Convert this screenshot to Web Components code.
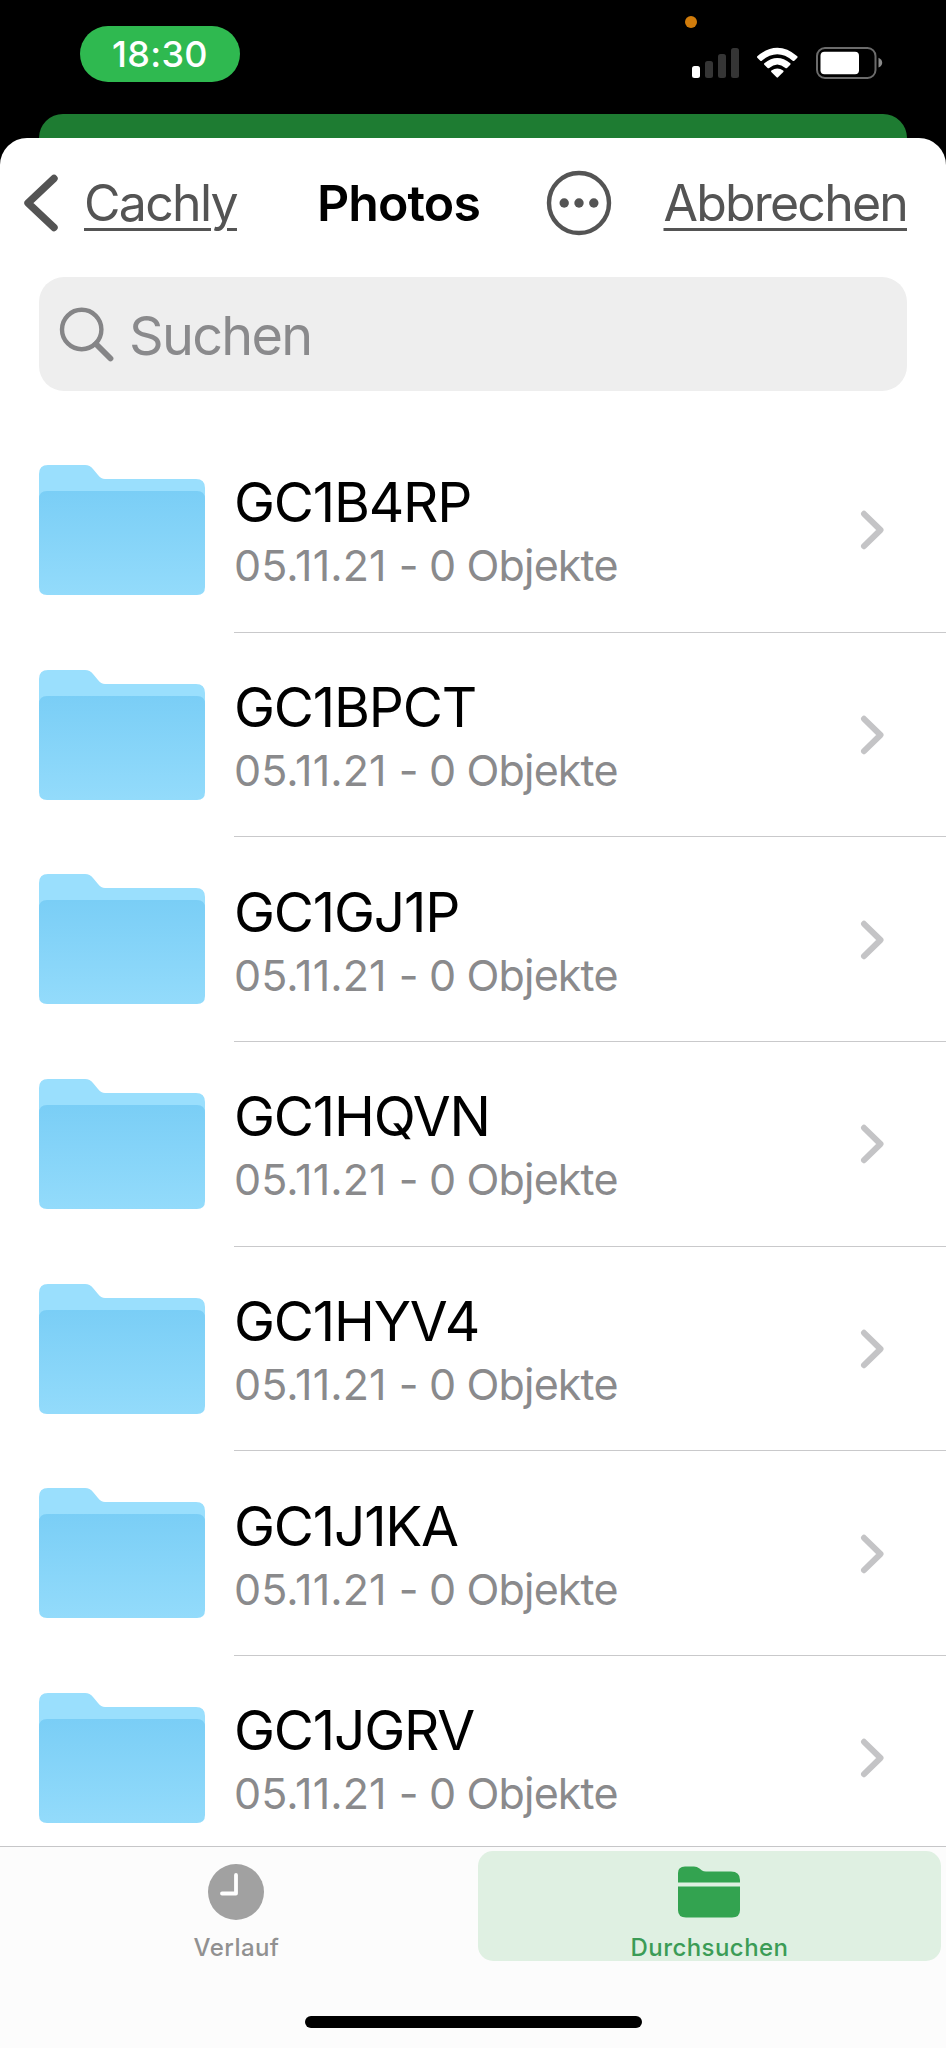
<!DOCTYPE html>
<html lang="de">
<head>
<meta charset="utf-8">
<title>Photos</title>
<style>
  html, body {
    margin: 0;
    background: #000;
  }
  body {
    font-family: Inter, "Liberation Sans", sans-serif;
    width: 946px;
    height: 2048px;
    overflow: hidden;
  }
</style>
</head>
<body>
<files-app></files-app>

<script>
// Status bar with the clock pill and the system icons
class StatusBar extends HTMLElement {
  constructor() {
    super();
    this.root = this.attachShadow({ mode: 'open' });
    this.root.innerHTML = `
      <style>
        :host {
          display: flex;
          justify-content: space-between;
          box-sizing: border-box;
          height: 114px;
          padding: 0 63px 0 80px;
          background: #000;
        }
        .time {
          width: 160px;
          height: 55.5px;
          margin-top: 26px;
          border-radius: 28px;
          background: #2fb950;
          color: #fff;
          font-size: 36px;
          font-weight: 500;
          line-height: 57px;
          text-align: center;
          letter-spacing: 0.3px;
        }
        svg { display: block; }
      </style>
      <div class="time"><slot></slot></div>
      <svg width="200" height="90" viewBox="683 0 200 90">
        <circle cx="691" cy="22" r="6" fill="#d17c0b"/>
        <rect x="692" y="66" width="8" height="12" rx="2.5" fill="#fff"/>
        <g fill="#353535">
          <rect x="705" y="61" width="8" height="17" rx="2.5"/>
          <rect x="718" y="54" width="8" height="24" rx="2.5"/>
          <rect x="731" y="48" width="8" height="30" rx="2.5"/>
        </g>
        <g fill="#fff">
          <path d="M757.3 56.2Q777.3 39.4 797.3 56.2Q798 57 797.3 57.7L794.3 60.7Q793.5 61.4 792.7 60.7Q777.3 47.8 761.9 60.7Q761.1 61.4 760.3 60.7L757.3 57.7Q756.6 57 757.3 56.2Z"/>
          <path d="M764.3 63.3Q777.3 52.5 790.3 63.3Q791 64.1 790.3 64.8L787 68Q786.2 68.6 785.4 68Q777.3 61 769.2 68Q768.4 68.6 767.6 68L764.3 64.8Q763.6 64.1 764.3 63.3Z"/>
          <path d="M771.4 70.4Q777.3 66.6 783.2 70.4Q784 71.1 783.3 71.9L778 77.3Q777.3 78 776.6 77.3L771.3 71.9Q770.6 71.1 771.4 70.4Z"/>
        </g>
        <rect x="817" y="48" width="58.5" height="30" rx="8" fill="none" stroke="#6b6b6b" stroke-width="2"/>
        <rect x="820.5" y="51.7" width="38.5" height="22.5" rx="4" fill="#fff"/>
        <path d="M878.5 57.8Q882.2 59.5 882.2 62.7T878.5 67.6Z" fill="#8a8a8a"/>
      </svg>
    `;
  }
}
customElements.define('status-bar', StatusBar);

// Navigation header: back link, title, more button, cancel link
class NavHeader extends HTMLElement {
  constructor() {
    super();
    this.root = this.attachShadow({ mode: 'open' });
    this.root.innerHTML = `
      <style>
        :host {
          display: flex;
          align-items: center;
          box-sizing: border-box;
          height: 130px;
          padding: 0 39px 0 24px;
          color: #545454;
          font-size: 50px;
          line-height: 60px;
          white-space: nowrap;
        }
        svg { display: block; flex: none; }
        .link {
          text-decoration: underline;
          text-decoration-thickness: 3px;
          text-underline-offset: 7px;
        }
        .back { margin-left: 24px; width: 153px; letter-spacing: -1.7px; }
        .title {
          width: 163px;
          margin-left: 80px;
          color: #000;
          font-weight: 600;
          letter-spacing: -0.9px;
        }
        .more { margin-left: 66px; }
        .cancel { margin-left: auto; letter-spacing: -1.8px; }
      </style>
      <svg width="36" height="58" viewBox="24 174 36 58" fill="none" stroke="#545454" stroke-width="7.4" stroke-linecap="round" stroke-linejoin="round">
        <path d="M54 178.5L28 203L54 227.5"/>
      </svg>
      <span class="link back"><slot name="back"></slot></span>
      <span class="title"><slot name="title"></slot></span>
      <svg class="more" width="66" height="66" viewBox="-33 -33 66 66">
        <circle r="30" fill="none" stroke="#545454" stroke-width="4.4"/>
        <g fill="#545454">
          <circle cx="-14.8" r="4.7"/>
          <circle r="4.7"/>
          <circle cx="14.8" r="4.7"/>
        </g>
      </svg>
      <span class="link cancel"><slot name="cancel"></slot></span>
    `;
  }
}
customElements.define('nav-header', NavHeader);

class SearchField extends HTMLElement {
  constructor() {
    super();
    this.root = this.attachShadow({ mode: 'open' });
    this.root.innerHTML = `
      <style>
        :host {
          display: flex;
          align-items: center;
          box-sizing: border-box;
          height: 114px;
          margin: 9px 39px 0;
          padding-left: 20px;
          border-radius: 25px;
          background: #eee;
          color: #8a8a8c;
          font-size: 54px;
          letter-spacing: -1.7px;
        }
        span { margin-left: 13px; padding-top: 3px; }
      </style>
      <svg width="57" height="57" viewBox="59 305 57 57" fill="none" stroke="#858587">
        <circle cx="81.7" cy="328.5" r="19.7" stroke-width="4.4"/>
        <path d="M96 343L110.5 357.5" stroke-width="5.8" stroke-linecap="round"/>
      </svg>
      <span><slot></slot></span>
    `;
  }
}
customElements.define('search-field', SearchField);

// One folder in the list, the name is slotted and the details come from attributes
class FolderRow extends HTMLElement {
  constructor() {
    super();
    this.root = this.attachShadow({ mode: 'open' });
  }

  connectedCallback() {
    this.root.innerHTML = `
      <style>
        :host {
          display: flex;
          align-items: stretch;
          flex: none;
          height: 204.7px;
          padding-left: 39px;
        }
        .folder { display: block; flex: none; margin-top: 37px; }
        .content {
          display: flex;
          align-items: center;
          justify-content: space-between;
          box-sizing: border-box;
          flex: 1;
          margin-left: 29px;
          padding: 1px 59px 0 0;
          border-bottom: 1px solid #c9c9cb;
        }
        .name {
          color: #000;
          font-size: 55px;
          line-height: 66px;
          letter-spacing: -1.2px;
        }
        .info {
          color: #8a8a8c;
          font-size: 43px;
          line-height: 52px;
          letter-spacing: -0.85px;
          margin-top: 4px;
        }
        .date { letter-spacing: 0.1px; }
      </style>
      <svg class="folder" width="166" height="131" viewBox="0 0 166 131">
        <defs>
          <linearGradient id="front" x1="0" y1="0" x2="0" y2="1">
            <stop offset="0" stop-color="#7acef6"/>
            <stop offset="1" stop-color="#93dbfb"/>
          </linearGradient>
        </defs>
        <path d="M0 9Q0 0 9 0H46Q51 0 54 4L59 10Q62 14 66 14H157Q166 14 166 23V60H0Z" fill="#9adffd"/>
        <path d="M0 34Q0 26 8 26H158Q166 26 166 34V122Q166 130 158 130H8Q0 130 0 122Z" fill="url(#front)"/>
      </svg>
      <div class="content">
        <div>
          <div class="name"><slot></slot></div>
          <div class="info"><span class="date">${this.getAttribute('date')} </span>- ${this.getAttribute('count')} Objekte</div>
        </div>
        <svg width="27" height="42" viewBox="0 0 27 42" fill="none" stroke="#c4c4c6" stroke-width="6" stroke-linecap="round" stroke-linejoin="round">
          <path d="M4 4.8L20.5 21L4 37.2"/>
        </svg>
      </div>
    `;
  }
}
customElements.define('folder-row', FolderRow);

class TabItem extends HTMLElement {
  constructor() {
    super();
    this.root = this.attachShadow({ mode: 'open' });
    this.root.innerHTML = `
      <style>
        :host {
          display: flex;
          flex-direction: column;
          align-items: center;
          flex: 1;
          height: 109.5px;
          margin: 4.5px 5px 5px;
          border-radius: 15px;
          color: #919191;
          font-size: 24px;
          font-weight: 500;
          line-height: 30px;
          letter-spacing: 0.45px;
        }
        :host([active]) {
          background: #dff0e2;
          color: #3b9c56;
        }
        ::slotted(svg) {
          display: block;
          flex: none;
          margin: 13px 1px 13px 0;
        }
      </style>
      <slot name="icon"></slot>
      <span><slot></slot></span>
    `;
  }
}
customElements.define('tab-item', TabItem);

class TabBar extends HTMLElement {
  constructor() {
    super();
    this.root = this.attachShadow({ mode: 'open' });
    this.root.innerHTML = `
      <style>
        :host {
          display: flex;
          flex-direction: column;
          align-items: center;
          flex: none;
          box-sizing: border-box;
          height: 202.5px;
          border-top: 1px solid #c6c6c8;
          background: #fcfcfc;
        }
        .tabs { display: flex; width: 100%; }
        .home {
          width: 337px;
          height: 12px;
          margin-top: 50.5px;
          border-radius: 6px;
          background: #000;
        }
      </style>
      <div class="tabs"><slot></slot></div>
      <div class="home"></div>
    `;
  }
}
customElements.define('tab-bar', TabBar);

class FilesApp extends HTMLElement {
  constructor() {
    super();
    this.root = this.attachShadow({ mode: 'open' });
    this.folders = ['GC1B4RP', 'GC1BPCT', 'GC1GJ1P', 'GC1HQVN', 'GC1HYV4', 'GC1J1KA', 'GC1JGRV'];
  }

  connectedCallback() {
    this.root.innerHTML = `
      <style>
        :host {
          display: flex;
          flex-direction: column;
          height: 2048px;
          background: #000;
        }
        .behind {
          flex: none;
          height: 24px;
          margin: 0 39px;
          border-radius: 25px 25px 0 0;
          background: #1e7c32;
        }
        .sheet {
          display: flex;
          flex-direction: column;
          flex: 1;
          min-height: 0;
          border-radius: 27px 27px 0 0;
          background: #fff;
        }
        .list {
          display: flex;
          flex-direction: column;
          flex: 1;
          min-height: 0;
          padding-top: 37px;
          overflow: hidden;
        }
      </style>
      <status-bar>18:30</status-bar>
      <div class="behind"></div>
      <div class="sheet">
        <nav-header>
          <span slot="back">Cachly</span>
          <span slot="title">Photos</span>
          <span slot="cancel">Abbrechen</span>
        </nav-header>
        <search-field>Suchen</search-field>
        <div class="list">
          ${this.folders.map((name) => `<folder-row date="05.11.21" count="0">${name}</folder-row>`).join('')}
        </div>
        <tab-bar>
          <tab-item>
            <svg slot="icon" width="56" height="56" viewBox="0 0 56 56">
              <circle cx="28" cy="28" r="28" fill="#a1a1a1"/>
              <path d="M28 11V29.5H14" fill="none" stroke="#fff" stroke-width="3.8" stroke-linecap="round" stroke-linejoin="round"/>
            </svg>
            Verlauf
          </tab-item>
          <tab-item active>
            <svg slot="icon" width="62" height="56" viewBox="0 0 62 56" fill="#33a350">
              <path d="M0 18.5V9Q0 2.5 7 2.5H16Q19 2.5 21.5 4.5L24 6.5Q25.5 7.5 28 7.5H53Q62 7.5 62 16V18.5Z"/>
              <path d="M0 22.5H62V46Q62 53.5 54 53.5H8Q0 53.5 0 46Z"/>
            </svg>
            Durchsuchen
          </tab-item>
        </tab-bar>
      </div>
    `;
  }
}
customElements.define('files-app', FilesApp);
</script>
</body>
</html>
